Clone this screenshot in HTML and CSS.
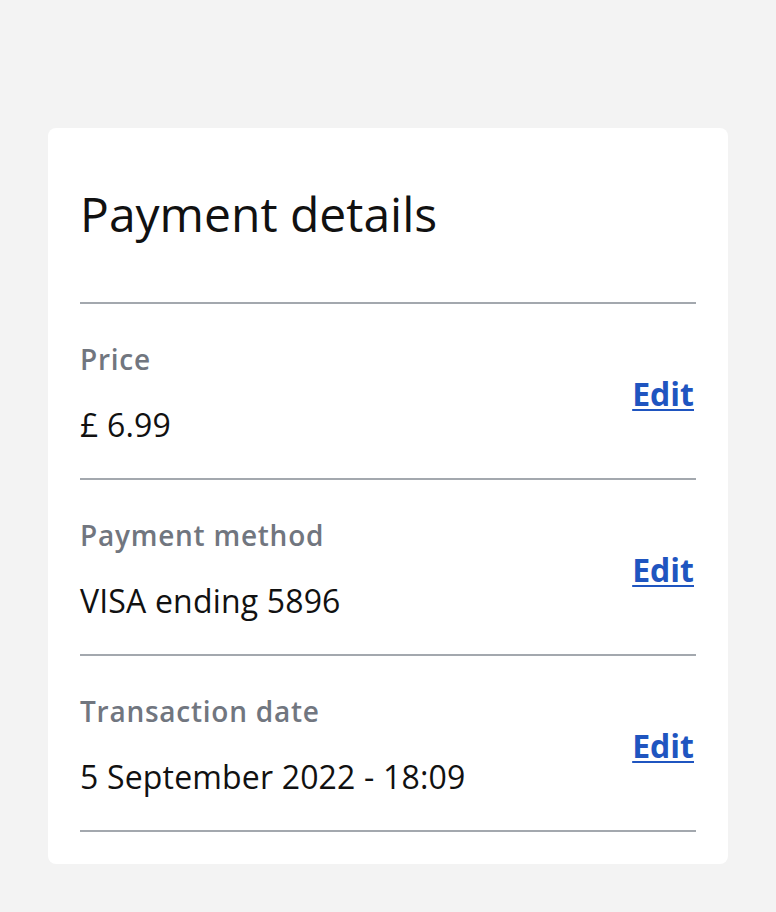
FILE: index.html
```html
<!DOCTYPE html>
<html lang="en">
<head>
<meta charset="utf-8">
<title>Payment details</title>
<link rel="stylesheet" href="styles.css">
</head>
<body>
<main class="page">
  <section class="card">
    <header class="card-header">
      <h1 class="card-title">Payment details</h1>
    </header>
    <dl class="details">
      <div class="detail-row">
        <div class="detail-text">
          <dt class="detail-label">Price</dt>
          <dd class="detail-value">£ 6.99</dd>
        </div>
        <a class="edit-link" href="#">Edit</a>
      </div>
      <div class="detail-row">
        <div class="detail-text">
          <dt class="detail-label">Payment method</dt>
          <dd class="detail-value">VISA ending 5896</dd>
        </div>
        <a class="edit-link" href="#">Edit</a>
      </div>
      <div class="detail-row">
        <div class="detail-text">
          <dt class="detail-label">Transaction date</dt>
          <dd class="detail-value">5 September 2022 - 18:09</dd>
        </div>
        <a class="edit-link" href="#">Edit</a>
      </div>
    </dl>
  </section>
</main>
</body>
</html>
```

FILE: styles.css
```css
html, body {
  margin: 0;
  padding: 0;
}

body {
  background: #f3f3f3;
  font-family: "Open Sans", "Noto Sans", sans-serif;
  color: #111111;
}

.page {
  padding: 128px 48px 48px;
}

.card {
  background: #ffffff;
  border-radius: 8px;
  padding: 0 32px 32px;
}

.card-header {
  padding: 54px 0 56px;
  border-bottom: 2px solid #a3a8ae;
}

.card-title {
  margin: 0;
  font-size: 48px;
  font-weight: 400;
  line-height: 64px;
  color: #111111;
}

.details {
  margin: 0;
}

.detail-row {
  display: flex;
  align-items: center;
  justify-content: space-between;
  padding: 36px 0 31px;
  border-bottom: 2px solid #a3a8ae;
}

.detail-text {
  display: flex;
  flex-direction: column;
  gap: 25px;
}

.detail-label {
  margin: 0;
  font-size: 28px;
  font-weight: 600;
  line-height: 38px;
  letter-spacing: 0.75px;
  color: #71767f;
}

.detail-value {
  margin: 0;
  font-size: 32px;
  font-weight: 400;
  line-height: 44px;
  letter-spacing: 0.17px;
  color: #111111;
}

.edit-link {
  font-size: 32px;
  font-weight: 700;
  line-height: 44px;
  color: #1f55c0;
  text-decoration: underline;
  text-decoration-thickness: 1.5px;
  text-underline-offset: 3px;
  margin-right: 2px;
}
```
